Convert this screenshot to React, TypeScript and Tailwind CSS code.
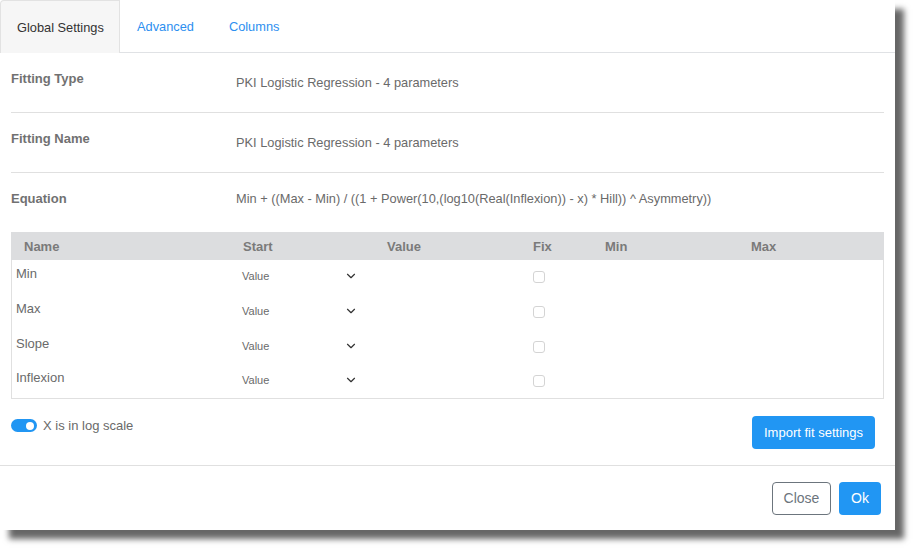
import { ChevronDown } from 'lucide-react'

const params = ['Min', 'Max', 'Slope', 'Inflexion']

const font = { fontFamily: '"Liberation Sans", Arial, sans-serif' }

function InfoRow({ label, value, last }: { label: string; value: string; last?: boolean }) {
  return (
    <div className={`flex h-[60px] mx-[11px] ${last ? '' : 'border-b border-[#e0e0e0]'}`}>
      <div className="w-[225px] pt-[16px] text-[13px] font-bold text-[#717171]">{label}</div>
      <div className="pt-[20px] text-[12.8px] text-[#6a6a6a]">{value}</div>
    </div>
  )
}

export default function App() {
  return (
    <div className="w-[918px] h-[554px] bg-white" style={font}>
      <div className="w-[895px] h-[530px] bg-white flex flex-col shadow-[9px_9px_6px_rgba(0,0,0,0.6)]">
        {/* tabs */}
        <div className="flex h-[53px] shrink-0">
          <div className="w-[120px] h-[53px] bg-[#f6f6f6] border border-b-0 border-[#e2e2e2] rounded-tl-[4px] flex items-center pl-[16px] pt-[2px] text-[12.8px] text-[#333]">
            Global Settings
          </div>
          <div className="flex-1 flex items-center pt-[2px] border-b border-[#e0e2e5] text-[12.8px] text-[#2d8ff0]">
            <span className="ml-[17px]">Advanced</span>
            <span className="ml-[35px]">Columns</span>
          </div>
        </div>

        <InfoRow label="Fitting Type" value="PKI Logistic Regression - 4 parameters" />
        <InfoRow label="Fitting Name" value="PKI Logistic Regression - 4 parameters" />
        <div className="flex h-[51px] mx-[11px]">
          <div className="w-[225px] pt-[16px] text-[13px] font-bold text-[#717171]">Equation</div>
          <div className="pt-[16px] text-[12.8px] text-[#6a6a6a]">
            Min + ((Max - Min) / ((1 + Power(10,(log10(Real(Inflexion)) - x) * Hill)) ^ Asymmetry))
          </div>
        </div>

        {/* parameters table */}
        <div className="mx-[11px] mt-[8px]">
          <div className="flex h-[28px] items-center pt-[1px] bg-[#dcdddf] text-[13px] font-bold text-[#7a7a7a]">
            <div className="w-[232px] pl-[13px]">Name</div>
            <div className="w-[144px]">Start</div>
            <div className="w-[146px]">Value</div>
            <div className="w-[72px]">Fix</div>
            <div className="w-[146px]">Min</div>
            <div>Max</div>
          </div>
          <div className="border border-t-0 border-[#e0e0e0] h-[139px] pt-[6px]">
            {params.map((p) => (
              <div key={p} className="flex h-[34.75px]">
                <div className="w-[226px] pl-[4px] text-[13px] text-[#6a6a6a] leading-[16px]">{p}</div>
                <div className="w-[144px] flex items-start pt-[3px] pl-[4px]">
                  <span className="text-[11px] text-[#6a6a6a] w-[102px] leading-[14px]">Value</span>
                  <ChevronDown className="w-[14px] h-[14px] text-[#333]" strokeWidth={2} />
                </div>
                <div className="w-[151px]" />
                <div className="pt-[5px]">
                  <div className="w-[12px] h-[12px] rounded-[3px] border border-[#d4d4d4] bg-white" />
                </div>
              </div>
            ))}
          </div>
        </div>

        {/* options row */}
        <div className="flex justify-between mx-[11px] mt-[17px] h-[33px]">
          <div className="flex items-start gap-[6px] pt-[3px]">
            <div className="relative w-[26px] h-[13px] rounded-full bg-[#2196f3]">
              <div className="absolute right-[3px] top-[2.5px] w-[8px] h-[8px] rounded-full bg-white" />
            </div>
            <span className="text-[13px] text-[#6a6a6a] leading-[13px]">X is in log scale</span>
          </div>
          <button className="mr-[9px] w-[123px] h-[33px] rounded-[4px] bg-[#2196f3] text-white text-[13px]">
            Import fit settings
          </button>
        </div>

        <div className="mt-[16px] border-t border-[#e0e0e0]" />

        <div className="flex justify-end gap-[8px] mt-[16px] mr-[14px]">
          <button className="w-[59px] h-[33px] rounded-[4px] border border-[#6c757d] text-[#6c757d] text-[14px]">
            Close
          </button>
          <button className="w-[42px] h-[33px] rounded-[4px] bg-[#2196f3] text-white text-[14px]">Ok</button>
        </div>
      </div>
    </div>
  )
}
